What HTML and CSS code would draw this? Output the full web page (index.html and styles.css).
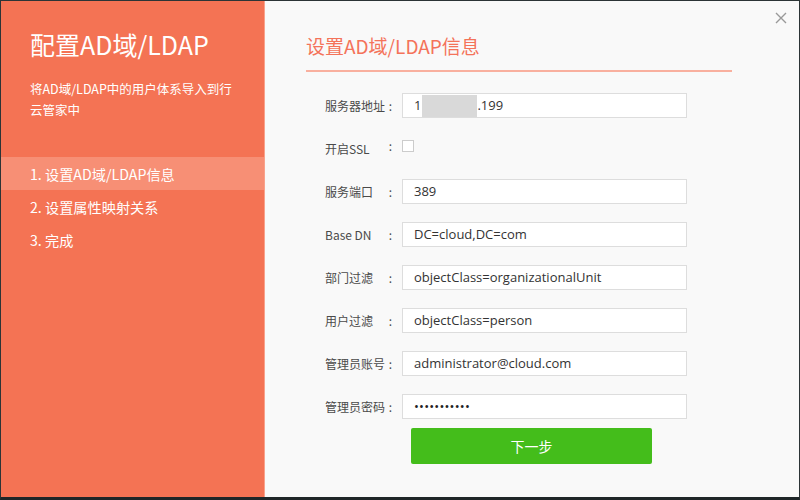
FILE: index.html
```html
<!DOCTYPE html>
<html>
<head>
<meta charset="utf-8">
<link rel="stylesheet" href="styles.css">
</head>
<body>
<div class="frame">
  <aside class="side">
    <h1 class="side-title">配置AD域/LDAP</h1>
    <p class="side-desc">将AD域/LDAP中的用户体系导入到行<br>云管家中</p>
    <ul class="steps">
      <li class="step active">1. 设置AD域/LDAP信息</li>
      <li class="step">2. 设置属性映射关系</li>
      <li class="step">3. 完成</li>
    </ul>
  </aside>
  <main class="main">
    <button class="close" aria-label="close">
      <svg width="12" height="12" viewBox="0 0 12 12"><path d="M1 1L11 11M11 1L1 11" stroke="#999" stroke-width="1.4" fill="none"/></svg>
    </button>
    <h2 class="main-title">设置AD域/LDAP信息</h2>
    <div class="form">
      <div class="row">
        <label class="lbl"><span>服务器地址</span><span class="colon">:</span></label>
        <div class="input"><span>1</span><span class="mask"></span><span>.199</span></div>
      </div>
      <div class="row">
        <label class="lbl"><span>开启SSL</span><span class="colon up">:</span></label>
        <span class="check"></span>
      </div>
      <div class="row">
        <label class="lbl"><span>服务端口</span><span class="colon">:</span></label>
        <div class="input">389</div>
      </div>
      <div class="row">
        <label class="lbl"><span>Base DN</span><span class="colon">:</span></label>
        <div class="input">DC=cloud,DC=com</div>
      </div>
      <div class="row">
        <label class="lbl"><span>部门过滤</span><span class="colon">:</span></label>
        <div class="input">objectClass=organizationalUnit</div>
      </div>
      <div class="row">
        <label class="lbl"><span>用户过滤</span><span class="colon">:</span></label>
        <div class="input">objectClass=person</div>
      </div>
      <div class="row">
        <label class="lbl"><span>管理员账号</span><span class="colon">:</span></label>
        <div class="input">administrator@cloud.com</div>
      </div>
      <div class="row">
        <label class="lbl"><span>管理员密码</span><span class="colon">:</span></label>
        <div class="input dots">•••••••••••</div>
      </div>
      <button class="next">下一步</button>
    </div>
  </main>
</div>
</body>
</html>
```
FILE: styles.css
```css
* { box-sizing: border-box; }
html, body { margin: 0; padding: 0; }
body {
  width: 800px; height: 500px; overflow: hidden;
  font-family: "Open Sans", "Noto Sans CJK SC", sans-serif;
}
.frame {
  width: 800px; height: 500px;
  border-top: 1px solid #2c3436;
  border-left: 1px solid #2c3436;
  border-right: 1px solid #2c3436;
  border-bottom: 3px solid #1f2628;
  display: flex;
  background: #f9f9f9;
}
.side {
  width: 264px;
  background: #f47354;
  border-right: 1px solid #f9a28c;
  color: #fff;
  padding-top: 25px;
}
.side-title {
  margin: 0 0 0 29px;
  font-size: 25px;
  font-weight: normal;
  line-height: 36px;
  font-family: "Noto Sans CJK SC", sans-serif;
}
.side-desc {
  margin: 16px 0 0 29px;
  font-size: 12.5px;
  line-height: 21px;
  font-family: "Noto Sans CJK SC", sans-serif;
}
.steps {
  list-style: none;
  margin: 37px 0 0 0;
  padding: 0;
}
.step {
  height: 33px;
  line-height: 34px;
  padding-left: 29px;
  font-size: 14.2px;
  font-family: "Noto Sans CJK SC", sans-serif;
}
.step.active { background: #f78f75; }
.main {
  flex: 1;
  position: relative;
  padding: 30px 0 0 41px;
}
.close {
  position: absolute;
  top: 11px; right: 12px;
  border: 0; background: none; padding: 0;
  width: 12px; height: 12px;
}
.close svg { display: block; }
.main-title {
  margin: 0;
  width: 426px;
  font-size: 19px;
  font-weight: normal;
  color: #f4735a;
  line-height: 30px;
  padding-bottom: 9px;
  border-bottom: 2px solid #f9b09f;
  font-family: "Noto Sans CJK SC", sans-serif;
}
.form {
  margin: 21px 0 0 19px;
  display: flex;
  flex-direction: column;
  gap: 18px;
}
.row {
  display: flex;
  align-items: center;
  height: 25px;
}
.lbl {
  width: 77px;
  display: flex;
  justify-content: space-between;
  padding-right: 10px;
  font-size: 12px;
  color: #4a4a4a;
  font-family: "Noto Sans CJK SC", sans-serif;
}
.colon.up { position: relative; top: -3px; }
.input {
  width: 285px;
  height: 25px;
  border: 1px solid #ddd;
  background: #fff;
  font-size: 13px;
  line-height: 23px;
  color: #333;
  padding-left: 11px;
  display: flex;
}
.mask {
  display: inline-block;
  width: 55px;
  height: 22px;
  margin-top: 1px;
  margin-left: 1px;
  background: #d9d9d9;
}
.dots { font-size: 13px; letter-spacing: 0.2px; color: #222; }
.check {
  width: 12px; height: 12px;
  border: 1px solid #ccc;
  background: #fff;
  margin-top: -5px;
}
.next {
  margin: -9px 0 0 86px;
  width: 241px;
  height: 36px;
  border: 0;
  border-radius: 2px;
  background: #44bd1b;
  color: #fff;
  font-size: 14px;
  font-family: "Noto Sans CJK SC", sans-serif;
}
```
